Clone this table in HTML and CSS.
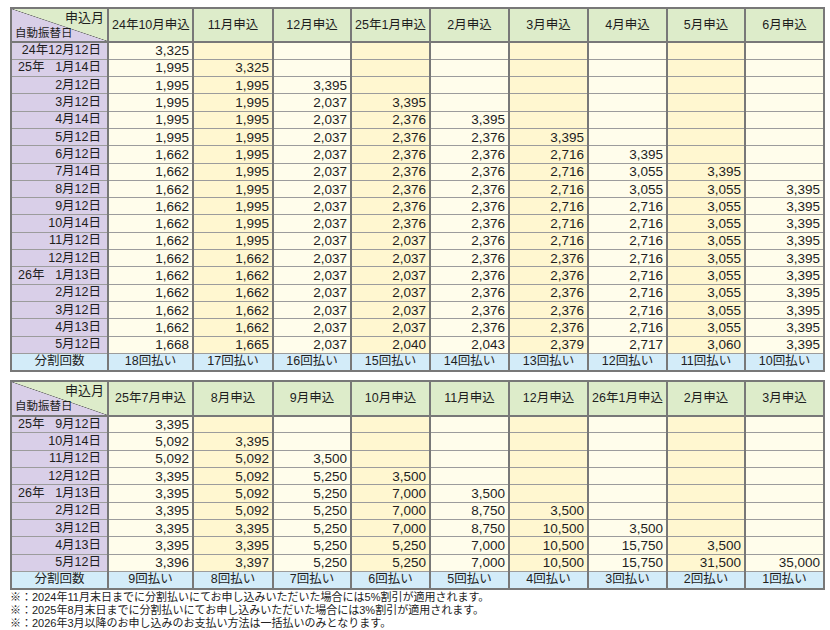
FILE: index.html
```html
<!DOCTYPE html>
<html lang="ja">
<head>
<meta charset="utf-8">
<title>分割払い表</title>
<link rel="stylesheet" href="styles.css">
</head>
<body>
<div class="page">
<table class="sched">
<colgroup><col class="w-lbl"><col class="w-c1"><col class="w-c2"><col class="w-c3"><col class="w-c"><col class="w-c"><col class="w-c"><col class="w-c"><col class="w-c8"><col class="w-c"></colgroup>
<tr class="head"><th class="corner"><div class="corner-top">申込月</div><div class="corner-bot">自動振替日</div></th><th>24年10月申込</th><th>11月申込</th><th>12月申込</th><th>25年1月申込</th><th>2月申込</th><th>3月申込</th><th>4月申込</th><th>5月申込</th><th>6月申込</th></tr>
<tr><th class="lbl">24年12月12日</th><td class="a">3,325</td><td class="b"></td><td class="a"></td><td class="b"></td><td class="a"></td><td class="b"></td><td class="a"></td><td class="b"></td><td class="a"></td></tr>
<tr><th class="lbl"><div class="split"><span>25年</span><span>1月14日</span></div></th><td class="a">1,995</td><td class="b">3,325</td><td class="a"></td><td class="b"></td><td class="a"></td><td class="b"></td><td class="a"></td><td class="b"></td><td class="a"></td></tr>
<tr><th class="lbl">2月12日</th><td class="a">1,995</td><td class="b">1,995</td><td class="a">3,395</td><td class="b"></td><td class="a"></td><td class="b"></td><td class="a"></td><td class="b"></td><td class="a"></td></tr>
<tr><th class="lbl">3月12日</th><td class="a">1,995</td><td class="b">1,995</td><td class="a">2,037</td><td class="b">3,395</td><td class="a"></td><td class="b"></td><td class="a"></td><td class="b"></td><td class="a"></td></tr>
<tr><th class="lbl">4月14日</th><td class="a">1,995</td><td class="b">1,995</td><td class="a">2,037</td><td class="b">2,376</td><td class="a">3,395</td><td class="b"></td><td class="a"></td><td class="b"></td><td class="a"></td></tr>
<tr><th class="lbl">5月12日</th><td class="a">1,995</td><td class="b">1,995</td><td class="a">2,037</td><td class="b">2,376</td><td class="a">2,376</td><td class="b">3,395</td><td class="a"></td><td class="b"></td><td class="a"></td></tr>
<tr><th class="lbl">6月12日</th><td class="a">1,662</td><td class="b">1,995</td><td class="a">2,037</td><td class="b">2,376</td><td class="a">2,376</td><td class="b">2,716</td><td class="a">3,395</td><td class="b"></td><td class="a"></td></tr>
<tr><th class="lbl">7月14日</th><td class="a">1,662</td><td class="b">1,995</td><td class="a">2,037</td><td class="b">2,376</td><td class="a">2,376</td><td class="b">2,716</td><td class="a">3,055</td><td class="b">3,395</td><td class="a"></td></tr>
<tr><th class="lbl">8月12日</th><td class="a">1,662</td><td class="b">1,995</td><td class="a">2,037</td><td class="b">2,376</td><td class="a">2,376</td><td class="b">2,716</td><td class="a">3,055</td><td class="b">3,055</td><td class="a">3,395</td></tr>
<tr><th class="lbl">9月12日</th><td class="a">1,662</td><td class="b">1,995</td><td class="a">2,037</td><td class="b">2,376</td><td class="a">2,376</td><td class="b">2,716</td><td class="a">2,716</td><td class="b">3,055</td><td class="a">3,395</td></tr>
<tr><th class="lbl">10月14日</th><td class="a">1,662</td><td class="b">1,995</td><td class="a">2,037</td><td class="b">2,376</td><td class="a">2,376</td><td class="b">2,716</td><td class="a">2,716</td><td class="b">3,055</td><td class="a">3,395</td></tr>
<tr><th class="lbl">11月12日</th><td class="a">1,662</td><td class="b">1,995</td><td class="a">2,037</td><td class="b">2,037</td><td class="a">2,376</td><td class="b">2,716</td><td class="a">2,716</td><td class="b">3,055</td><td class="a">3,395</td></tr>
<tr><th class="lbl">12月12日</th><td class="a">1,662</td><td class="b">1,662</td><td class="a">2,037</td><td class="b">2,037</td><td class="a">2,376</td><td class="b">2,376</td><td class="a">2,716</td><td class="b">3,055</td><td class="a">3,395</td></tr>
<tr><th class="lbl"><div class="split"><span>26年</span><span>1月13日</span></div></th><td class="a">1,662</td><td class="b">1,662</td><td class="a">2,037</td><td class="b">2,037</td><td class="a">2,376</td><td class="b">2,376</td><td class="a">2,716</td><td class="b">3,055</td><td class="a">3,395</td></tr>
<tr><th class="lbl">2月12日</th><td class="a">1,662</td><td class="b">1,662</td><td class="a">2,037</td><td class="b">2,037</td><td class="a">2,376</td><td class="b">2,376</td><td class="a">2,716</td><td class="b">3,055</td><td class="a">3,395</td></tr>
<tr><th class="lbl">3月12日</th><td class="a">1,662</td><td class="b">1,662</td><td class="a">2,037</td><td class="b">2,037</td><td class="a">2,376</td><td class="b">2,376</td><td class="a">2,716</td><td class="b">3,055</td><td class="a">3,395</td></tr>
<tr><th class="lbl">4月13日</th><td class="a">1,662</td><td class="b">1,662</td><td class="a">2,037</td><td class="b">2,037</td><td class="a">2,376</td><td class="b">2,376</td><td class="a">2,716</td><td class="b">3,055</td><td class="a">3,395</td></tr>
<tr><th class="lbl">5月12日</th><td class="a">1,668</td><td class="b">1,665</td><td class="a">2,037</td><td class="b">2,040</td><td class="a">2,043</td><td class="b">2,379</td><td class="a">2,717</td><td class="b">3,060</td><td class="a">3,395</td></tr>
<tr class="cnt"><th>分割回数</th><td>18回払い</td><td>17回払い</td><td>16回払い</td><td>15回払い</td><td>14回払い</td><td>13回払い</td><td>12回払い</td><td>11回払い</td><td>10回払い</td></tr>
</table>

<table class="sched second">
<colgroup><col class="w-lbl"><col class="w-c1"><col class="w-c2"><col class="w-c3"><col class="w-c"><col class="w-c"><col class="w-c"><col class="w-c"><col class="w-c8"><col class="w-c"></colgroup>
<tr class="head tall"><th class="corner"><div class="corner-top">申込月</div><div class="corner-bot">自動振替日</div></th><th>25年7月申込</th><th>8月申込</th><th>9月申込</th><th>10月申込</th><th>11月申込</th><th>12月申込</th><th>26年1月申込</th><th>2月申込</th><th>3月申込</th></tr>
<tr><th class="lbl"><div class="split"><span>25年</span><span>9月12日</span></div></th><td class="a">3,395</td><td class="b"></td><td class="a"></td><td class="b"></td><td class="a"></td><td class="b"></td><td class="a"></td><td class="b"></td><td class="a"></td></tr>
<tr><th class="lbl">10月14日</th><td class="a">5,092</td><td class="b">3,395</td><td class="a"></td><td class="b"></td><td class="a"></td><td class="b"></td><td class="a"></td><td class="b"></td><td class="a"></td></tr>
<tr><th class="lbl">11月12日</th><td class="a">5,092</td><td class="b">5,092</td><td class="a">3,500</td><td class="b"></td><td class="a"></td><td class="b"></td><td class="a"></td><td class="b"></td><td class="a"></td></tr>
<tr><th class="lbl">12月12日</th><td class="a">3,395</td><td class="b">5,092</td><td class="a">5,250</td><td class="b">3,500</td><td class="a"></td><td class="b"></td><td class="a"></td><td class="b"></td><td class="a"></td></tr>
<tr><th class="lbl"><div class="split"><span>26年</span><span>1月13日</span></div></th><td class="a">3,395</td><td class="b">5,092</td><td class="a">5,250</td><td class="b">7,000</td><td class="a">3,500</td><td class="b"></td><td class="a"></td><td class="b"></td><td class="a"></td></tr>
<tr><th class="lbl">2月12日</th><td class="a">3,395</td><td class="b">5,092</td><td class="a">5,250</td><td class="b">7,000</td><td class="a">8,750</td><td class="b">3,500</td><td class="a"></td><td class="b"></td><td class="a"></td></tr>
<tr><th class="lbl">3月12日</th><td class="a">3,395</td><td class="b">3,395</td><td class="a">5,250</td><td class="b">7,000</td><td class="a">8,750</td><td class="b">10,500</td><td class="a">3,500</td><td class="b"></td><td class="a"></td></tr>
<tr><th class="lbl">4月13日</th><td class="a">3,395</td><td class="b">3,395</td><td class="a">5,250</td><td class="b">5,250</td><td class="a">7,000</td><td class="b">10,500</td><td class="a">15,750</td><td class="b">3,500</td><td class="a"></td></tr>
<tr><th class="lbl">5月12日</th><td class="a">3,396</td><td class="b">3,397</td><td class="a">5,250</td><td class="b">5,250</td><td class="a">7,000</td><td class="b">10,500</td><td class="a">15,750</td><td class="b">31,500</td><td class="a">35,000</td></tr>
<tr class="cnt"><th>分割回数</th><td>9回払い</td><td>8回払い</td><td>7回払い</td><td>6回払い</td><td>5回払い</td><td>4回払い</td><td>3回払い</td><td>2回払い</td><td>1回払い</td></tr>
</table>

<div class="notes">
<p>※：2024年11月末日までに分割払いにてお申し込みいただいた場合には5%割引が適用されます。</p>
<p>※：2025年8月末日までに分割払いにてお申し込みいただいた場合には3%割引が適用されます。</p>
<p>※：2026年3月以降のお申し込みのお支払い方法は一括払いのみとなります。</p>
</div>
</div>
</body>
</html>
```
FILE: styles.css
```css
* { box-sizing: border-box; }
html, body { margin: 0; padding: 0; background: #ffffff; }
body {
  font-family: "Liberation Sans", "Noto Sans CJK JP", sans-serif;
  color: #1e1e1e;
}
.page {
  padding: 7px 0 0 10px;
}
.sched {
  border-collapse: collapse;
  table-layout: fixed;
  width: 814px;
  border: 2px solid #787878;
}
.sched.second { margin-top: 8px; }
.w-lbl { width: 97px; }
.w-c1 { width: 85px; }
.w-c2 { width: 80px; }
.w-c3 { width: 78px; }
.w-c { width: 79px; }
.w-c8 { width: 78px; }

.sched th, .sched td {
  border-left: 2px solid #787878;
  border-right: 2px solid #787878;
  border-top: 1px solid #9c9c9c;
  border-bottom: 1px solid #9c9c9c;
  padding: 0 3px;
  height: 17.3px;
  line-height: 15px;
  font-weight: normal;
  white-space: nowrap;
}
.sched td {
  text-align: right;
  font-size: 13.5px;
}
.sched td.a { background: #fffdeb; }
.sched td.b { background: #fff7d0; }

.sched .lbl {
  background: #d9cfe8;
  text-align: right;
  font-size: 12.5px;
  padding: 0 6px 0 6px;
}
.split {
  display: flex;
  justify-content: space-between;
}

.head th {
  height: 34px;
  background: #ddecca;
  font-size: 12.5px;
  text-align: center;
  border-bottom: 2px solid #787878;
}
.head.tall th { height: 35px; }
.head th.corner {
  padding: 0 3px 0 3px;
  background: linear-gradient(to top right, #d9cfe8 calc(50% - 0.6px), #6e6e6e 50%, #ddecca calc(50% + 0.6px));
}
.corner-top { text-align: right; font-size: 13px; line-height: 14px; }
.corner-bot { text-align: left; font-size: 11.5px; line-height: 13px; margin-top: 2px; }

.cnt th, .cnt td {
  background: #d3ecf9;
  text-align: center;
  font-size: 12.5px;
  border-top: 1px solid #8c8c8c;
}

.notes {
  margin-top: 1px;
  font-size: 11px;
  line-height: 13px;
  color: #222;
}
.notes p { margin: 0; }
```
